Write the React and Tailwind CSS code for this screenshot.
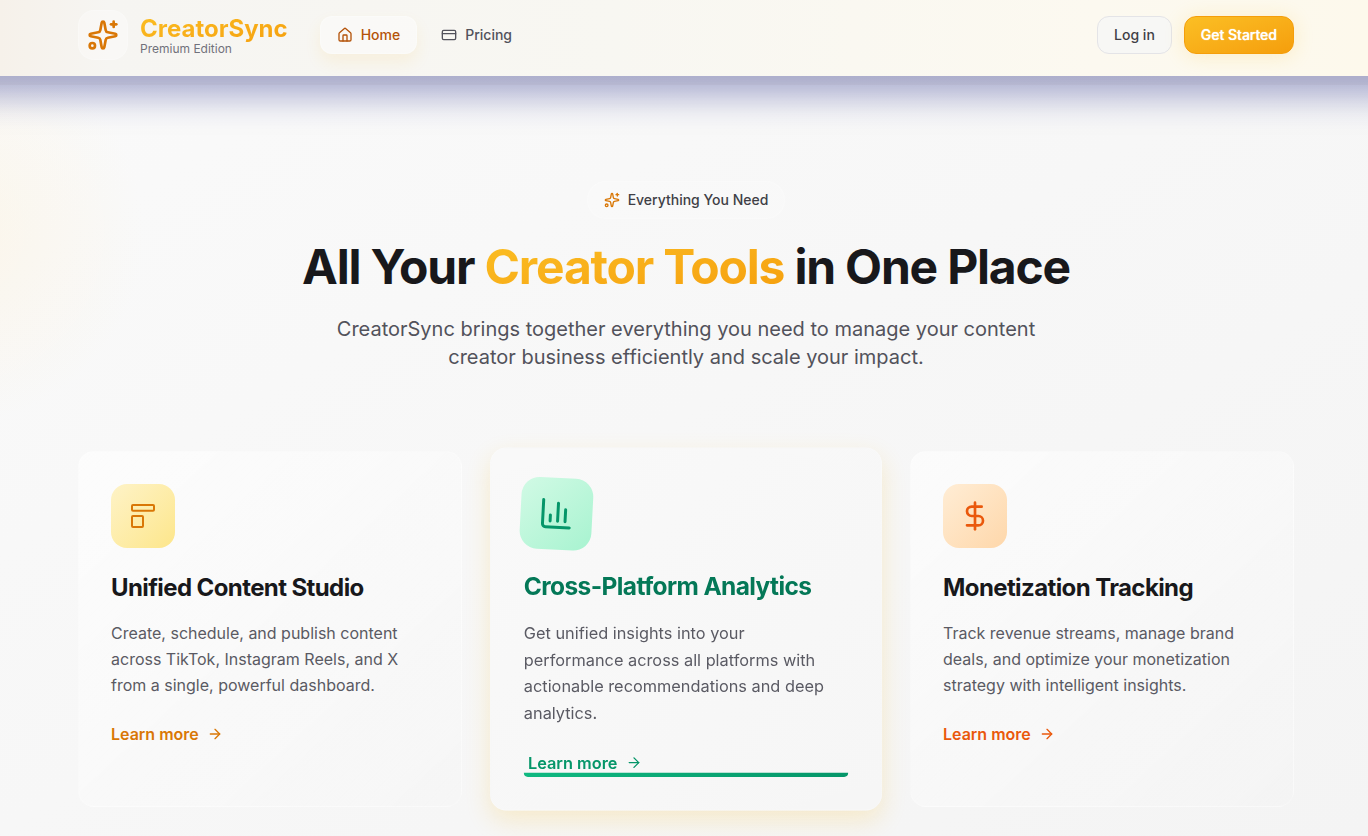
import { Sparkles, House, CreditCard, ArrowRight, DollarSign } from "lucide-react";

function StudioIcon({ className }) {
  return (
    <svg viewBox="0 0 24 24" fill="none" stroke="currentColor" strokeWidth="1.5" strokeLinejoin="round" className={className} aria-hidden="true">
      <rect x="3.75" y="3.75" width="16.5" height="4.25" rx="0.75" />
      <rect x="3.75" y="12" width="8.25" height="8.25" rx="0.75" />
    </svg>
  );
}

function AnalyticsIcon({ className }) {
  return (
    <svg viewBox="0 0 24 24" fill="none" stroke="currentColor" strokeWidth="2" strokeLinecap="round" strokeLinejoin="round" className={className} aria-hidden="true">
      <path d="M3 3v16a2 2 0 0 0 2 2h16" />
      <path d="M13 17V5" />
      <path d="M18 17V9" />
      <path d="M8 17v-4" />
    </svg>
  );
}

const features = [
  {
    title: "Unified Content Studio",
    text: "Create, schedule, and publish content across TikTok, Instagram Reels, and X from a single, powerful dashboard.",
    Icon: StudioIcon,
    tile: "from-[#fef3c7] to-[#fde68a] text-[#d97706]",
    link: "text-[#d97706]",
  },
  {
    title: "Cross-Platform Analytics",
    text: "Get unified insights into your performance across all platforms with actionable recommendations and deep analytics.",
    Icon: AnalyticsIcon,
    tile: "from-[#d1fae5] to-[#a7f3d0] text-[#059669]",
    link: "text-[#059669]",
    active: true,
  },
  {
    title: "Monetization Tracking",
    text: "Track revenue streams, manage brand deals, and optimize your monetization strategy with intelligent insights.",
    Icon: DollarSign,
    tile: "from-[#ffedd5] to-[#fed7aa] text-[#ea580c]",
    link: "text-[#ea580c]",
  },
];

function FeatureCard({ title, text, Icon, tile, link, active }) {
  return (
    <article
      className={
        active
          ? "z-10 scale-[1.02] rounded-2xl border border-white/10 bg-linear-to-br from-[#f9f9f9] to-[#f6f6f6] p-8 shadow-[0_10px_24px_rgba(251,191,36,0.2)]"
          : "rounded-2xl border border-white/20 bg-linear-to-br from-white/60 to-white/5 p-8"
      }
    >
      <div className="relative h-full pb-0.5">
        <div className={`mb-6 flex size-16 items-center justify-center rounded-2xl bg-linear-to-br ${tile} ${active ? "rotate-3 scale-110" : ""}`}>
          <Icon className="size-8" />
        </div>
        <h3 className={`mb-4 text-2xl font-bold tracking-tight ${active ? "text-[#047857]" : "text-zinc-900"}`}>{title}</h3>
        <p className="mb-6 text-base leading-[26px] text-[#5a5a63]">{text}</p>
        <a href="#" className={`flex items-center gap-2 font-semibold ${link} ${active ? "pl-1" : ""}`}>
          Learn more
          <ArrowRight className="size-4" />
        </a>
        {active && <div className="absolute inset-x-0 bottom-0 h-1 rounded-b-2xl bg-linear-to-r from-[#10b981] to-[#059669]" />}
      </div>
    </article>
  );
}

export default function App() {
  return (
    <div className="relative min-h-screen overflow-hidden bg-linear-to-br from-[#fafafa] to-[#f4f4f4] font-['Inter',sans-serif] text-zinc-900">
      <div className="pointer-events-none absolute top-10 -left-60 size-96 rounded-full bg-[radial-gradient(closest-side,rgba(255,240,210,0.4),transparent)]" />

      <header className="relative z-20 bg-[linear-gradient(90deg,#f6f1ea_0%,#f6f5f2_8%,#f8f7f2_45%,#fcf9f0_80%,#fdf9ec_100%)] pl-1 shadow-[0_9px_0_rgba(110,100,70,0.05),0_-20px_32px_40px_rgba(31,38,135,0.37)]">
        <div className="mx-auto flex max-w-7xl items-center justify-between px-8 pt-2.5 pb-4">
          <div className="flex items-center gap-8">
            <a href="#" className="flex items-center gap-3">
              <span className="rounded-2xl border border-white/20 bg-white/30 p-2 text-[#d97706]">
                <Sparkles className="size-8" />
              </span>
              <span className="flex flex-col">
                <span className="bg-linear-to-br from-[#fbbf24] to-[#f59e0b] bg-clip-text text-2xl font-bold text-transparent">CreatorSync</span>
                <span className="-mt-1 text-xs text-zinc-500">Premium Edition</span>
              </span>
            </a>
            <nav className="flex items-center gap-2 text-sm font-medium">
              <a href="#" className="flex items-center gap-2 rounded-xl border border-white/20 bg-white/40 px-4 py-2 text-[#b45309] shadow-[0_8px_16px_rgba(251,191,36,0.1)]">
                <House className="size-4" />
                Home
              </a>
              <a href="#" className="flex items-center gap-2 rounded-xl px-4 py-2 text-[#52525b]">
                <CreditCard className="size-4" />
                Pricing
              </a>
            </nav>
          </div>
          <div className="flex items-center gap-3 text-sm font-medium">
            <button type="button" className="rounded-xl border border-zinc-200 bg-[#f7f7f5] px-4 py-2 text-[#3f3f46]">Log in</button>
            <button type="button" className="rounded-xl border border-[#f59e0b] bg-linear-to-br from-[#fbbf24] to-[#f59e0b] px-4 py-2 text-white shadow-[0_2px_20px_rgba(251,191,36,0.2)] text-shadow-[0_0_1px_#fff]">Get Started</button>
          </div>
        </div>
      </header>

      <main className="relative mx-auto max-w-[1284px] pt-[105px] pr-8 pb-8 pl-9">
        <section className="mb-20 flex flex-col items-center text-center">
          <div className="mb-6 flex items-center gap-2 rounded-full border border-white/20 bg-white/20 px-4 py-2 text-sm font-medium text-[#3f3f46]">
            <Sparkles className="size-4 text-[#d97706]" />
            Everything You Need
          </div>
          <h2 className="mb-6 text-5xl font-bold tracking-tight">
            All Your <span className="bg-linear-to-br from-[#fbbf24] to-[#f59e0b] bg-clip-text text-transparent">Creator Tools</span> in One Place
          </h2>
          <p className="max-w-3xl text-xl leading-7 text-[#52525b]">
            CreatorSync brings together everything you need to manage your content creator business efficiently and scale your impact.
          </p>
        </section>
        <section className="grid gap-8 md:grid-cols-3">
          {features.map((feature) => (
            <FeatureCard key={feature.title} {...feature} />
          ))}
        </section>
      </main>
    </div>
  );
}
